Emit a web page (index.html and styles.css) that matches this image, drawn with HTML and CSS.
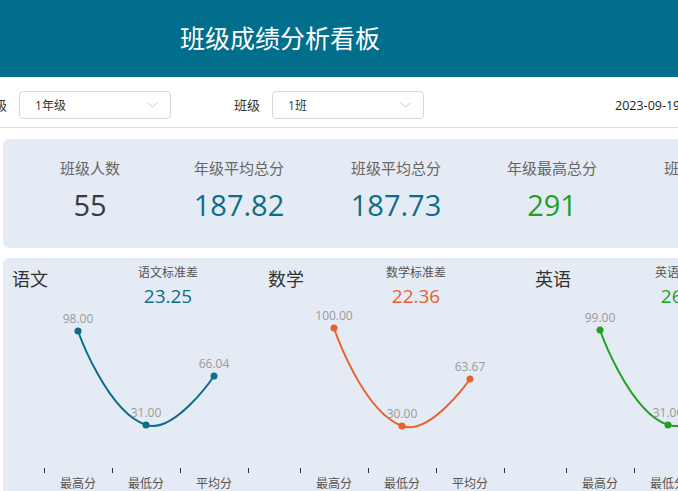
FILE: index.html
```html
<!DOCTYPE html>
<html lang="zh-CN">
<head>
<meta charset="utf-8">
<title>班级成绩分析看板</title>
<link rel="stylesheet" href="styles.css">
</head>
<body>
<div class="page">
  <header class="topbar">
    <h1 class="title">班级成绩分析看板</h1>
  </header>

  <div class="filters">
    <div class="filter">
      <span class="filter-label">年级</span>
      <div class="select">
        <span class="select-value">1年级</span>
        <svg class="chevron" width="11" height="6" viewBox="0 0 11 6"><polyline points="0.5,0.5 5.5,5 10.5,0.5" fill="none" stroke="#c3c7cf" stroke-width="1"/></svg>
      </div>
    </div>
    <div class="filter filter-class">
      <span class="filter-label">班级</span>
      <div class="select">
        <span class="select-value">1班</span>
        <svg class="chevron" width="11" height="6" viewBox="0 0 11 6"><polyline points="0.5,0.5 5.5,5 10.5,0.5" fill="none" stroke="#c3c7cf" stroke-width="1"/></svg>
      </div>
    </div>
    <div class="date">2023-09-19 星期二</div>
  </div>

  <section class="stats">
    <div class="stat">
      <div class="stat-label">班级人数</div>
      <div class="stat-value value-dark">55</div>
    </div>
    <div class="stat">
      <div class="stat-label">年级平均总分</div>
      <div class="stat-value value-teal">187.82</div>
    </div>
    <div class="stat">
      <div class="stat-label">班级平均总分</div>
      <div class="stat-value value-teal">187.73</div>
    </div>
    <div class="stat">
      <div class="stat-label">年级最高总分</div>
      <div class="stat-value value-green">291</div>
    </div>
    <div class="stat">
      <div class="stat-label">班级最高总分</div>
      <div class="stat-value value-green">285</div>
    </div>
  </section>

  <section class="charts">
    <div class="subject subject-chinese">
      <div class="subject-head">
        <div class="subject-title">语文</div>
        <div class="std">
          <div class="std-label">语文标准差</div>
          <div class="std-value value-teal">23.25</div>
        </div>
      </div>
      <svg class="chart" width="256" height="190" viewBox="3 308 256 190">
        <g class="ticks" stroke="#333" stroke-width="1">
          <line x1="44.5" y1="468" x2="44.5" y2="473"/>
          <line x1="112.5" y1="468" x2="112.5" y2="473"/>
          <line x1="180.5" y1="468" x2="180.5" y2="473"/>
          <line x1="248.5" y1="468" x2="248.5" y2="473"/>
        </g>
        <text class="tip" x="103" y="440">分类：最高分</text>
        <text class="tip" x="103" y="464">分数(满分)：98.00</text>
        <path d="M78,331 C78,331 106.6,411.9 146,425 C174.6,434.5 214,376 214,376" fill="none" stroke="#0d6e8a" stroke-width="2"/>
        <g fill="#0d6e8a">
          <circle cx="78" cy="331" r="3.5"/>
          <circle cx="146" cy="425" r="3.5"/>
          <circle cx="214" cy="376" r="3.5"/>
        </g>
        <g class="pt-label">
          <text x="78" y="323">98.00</text>
          <text x="146" y="417">31.00</text>
          <text x="214" y="368">66.04</text>
        </g>
        <g class="axis-label">
          <text x="78" y="488">最高分</text>
          <text x="146" y="488">最低分</text>
          <text x="214" y="488">平均分</text>
        </g>
      </svg>
    </div>

    <div class="subject subject-math">
      <div class="subject-head">
        <div class="subject-title">数学</div>
        <div class="std">
          <div class="std-label">数学标准差</div>
          <div class="std-value value-orange">22.36</div>
        </div>
      </div>
      <svg class="chart" width="266" height="190" viewBox="259 308 266 190">
        <g class="ticks" stroke="#333" stroke-width="1">
          <line x1="300.5" y1="468" x2="300.5" y2="473"/>
          <line x1="368.5" y1="468" x2="368.5" y2="473"/>
          <line x1="436.5" y1="468" x2="436.5" y2="473"/>
          <line x1="504.5" y1="468" x2="504.5" y2="473"/>
        </g>
        <path d="M334,328 C334,328 361.9,411 402,426 C429.9,436.5 470,379 470,379" fill="none" stroke="#e6622e" stroke-width="2"/>
        <g fill="#e6622e">
          <circle cx="334" cy="328" r="3.5"/>
          <circle cx="402" cy="426" r="3.5"/>
          <circle cx="470" cy="379" r="3.5"/>
        </g>
        <g class="pt-label">
          <text x="334" y="320">100.00</text>
          <text x="402" y="418">30.00</text>
          <text x="470" y="371">63.67</text>
        </g>
        <g class="axis-label">
          <text x="334" y="488">最高分</text>
          <text x="402" y="488">最低分</text>
          <text x="470" y="488">平均分</text>
        </g>
      </svg>
    </div>

    <div class="subject subject-english">
      <div class="subject-head">
        <div class="subject-title">英语</div>
        <div class="std">
          <div class="std-label">英语标准差</div>
          <div class="std-value value-green">26.14</div>
        </div>
      </div>
      <svg class="chart" width="300" height="190" viewBox="525 308 300 190">
        <g class="ticks" stroke="#333" stroke-width="1">
          <line x1="566.5" y1="468" x2="566.5" y2="473"/>
          <line x1="634.5" y1="468" x2="634.5" y2="473"/>
          <line x1="702.5" y1="468" x2="702.5" y2="473"/>
          <line x1="770.5" y1="468" x2="770.5" y2="473"/>
        </g>
        <path d="M600,330 C600,330 628.6,411.6 668,425 C696.6,434.6 736,377 736,377" fill="none" stroke="#23a024" stroke-width="2"/>
        <g fill="#23a024">
          <circle cx="600" cy="330" r="3.5"/>
          <circle cx="668" cy="425" r="3.5"/>
          <circle cx="736" cy="377" r="3.5"/>
        </g>
        <g class="pt-label">
          <text x="600" y="322">99.00</text>
          <text x="668" y="417">31.00</text>
          <text x="736" y="369">65.42</text>
        </g>
        <g class="axis-label">
          <text x="600" y="488">最高分</text>
          <text x="668" y="488">最低分</text>
          <text x="736" y="488">平均分</text>
        </g>
      </svg>
    </div>
  </section>
</div>
</body>
</html>
```

FILE: styles.css
```css
html, body {
  margin: 0;
  padding: 0;
}

body {
  width: 678px;
  height: 491px;
  overflow: hidden;
  background: #ffffff;
  font-family: "Open Sans", "Noto Sans CJK SC", sans-serif;
  color: #333;
}

.page {
  width: 1000px;
}

.topbar {
  height: 77px;
  background: #016e8c;
  display: flex;
  align-items: center;
  padding-left: 180px;
  box-sizing: border-box;
}

.title {
  margin: 0;
  font-size: 25px;
  font-weight: 400;
  color: #ffffff;
  line-height: 1;
  letter-spacing: 0;
}

.filters {
  height: 45px;
  padding-top: 5px;
  border-bottom: 1px solid #dcdfe4;
  display: flex;
  align-items: center;
  margin-left: -19px;
}

.filter {
  display: flex;
  align-items: center;
  gap: 12px;
}

.filter-class {
  margin-left: 63px;
}

.filter-label {
  font-size: 13px;
  color: #333;
}

.select {
  width: 152px;
  height: 28px;
  box-sizing: border-box;
  border: 1px solid #d3d7de;
  border-radius: 4px;
  background: #fff;
  display: flex;
  align-items: center;
  justify-content: space-between;
  padding: 0 12px 0 15px;
}

.select-value {
  font-size: 12px;
  color: #333;
}

.chevron {
  display: block;
  margin-top: 1px;
}

.date {
  margin-left: 191px;
  font-size: 12.5px;
  color: #222;
  white-space: nowrap;
}

.stats {
  margin: 11px 0 0 3px;
  width: 900px;
  height: 109px;
  box-sizing: border-box;
  background: #e4ebf4;
  border-radius: 6px;
  display: grid;
  grid-template-columns: 150px 148px 166px 146px 168px;
  padding: 18px 0 0 12px;
}

.stat {
  text-align: center;
}

.stat-label {
  font-size: 15px;
  line-height: 22px;
  color: #666;
}

.stat-value {
  margin-top: 8px;
  font-size: 29px;
  line-height: 36px;
}

.value-dark { color: #3a3a3a; }
.value-teal { color: #0d6e8a; }
.value-green { color: #23a024; }
.value-orange { color: #e6622e; }

.charts {
  margin: 10px 0 0 3px;
  width: 900px;
  height: 260px;
  background: #e4ebf4;
  border-radius: 6px;
  display: flex;
}

.subject {
  flex: none;
}

.subject-chinese { width: 256px; }
.subject-math { width: 266px; }
.subject-english { width: 300px; }

.subject-head {
  display: flex;
  align-items: flex-start;
  padding: 7px 0 0 9px;
  height: 50px;
  box-sizing: border-box;
}

.subject-english .subject-head {
  padding-left: 10px;
}

.subject-title {
  margin-top: 2px;
  font-size: 18px;
  line-height: 24px;
  color: #333;
}

.std {
  width: 100px;
  text-align: center;
}

.subject-chinese .std { margin-left: 70px; }
.subject-math .std { margin-left: 62px; }
.subject-english .std { margin-left: 64px; }

.std-label {
  font-size: 12px;
  line-height: 16px;
  color: #555;
}

.std-value {
  margin-top: 3px;
  font-size: 19px;
  line-height: 24px;
}

.chart {
  display: block;
  overflow: visible;
}

.pt-label text {
  font-family: "Open Sans", "Noto Sans CJK SC", sans-serif;
  font-size: 12px;
  fill: #9a9a9a;
  text-anchor: middle;
}

.axis-label text {
  font-family: "Noto Sans CJK SC", sans-serif;
  font-size: 12px;
  fill: #555;
  text-anchor: middle;
}

.tip {
  font-family: "Noto Sans CJK SC", sans-serif;
  font-size: 13px;
  fill: #ffffff;
  fill-opacity: 0.14;
}
```
